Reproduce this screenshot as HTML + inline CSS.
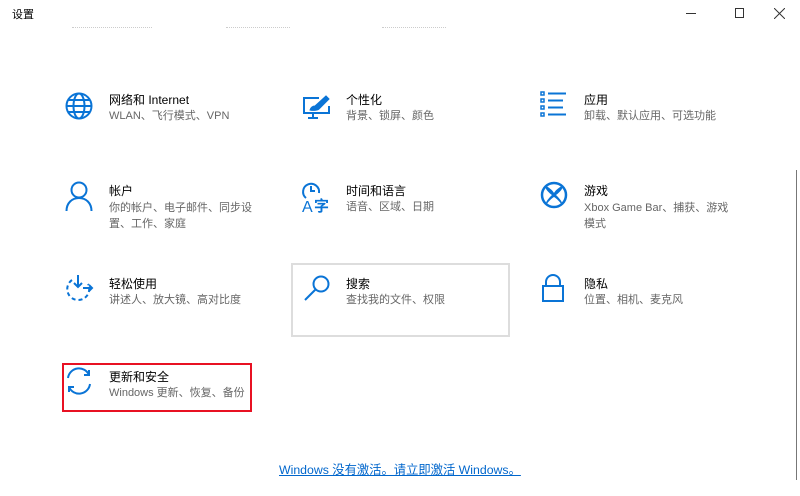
<!DOCTYPE html>
<html><head><meta charset="utf-8"><style>
*{margin:0;padding:0;box-sizing:border-box}
body{width:800px;height:496px;background:#fff;position:relative;overflow:hidden;font-family:"Liberation Sans","Noto Sans CJK SC",sans-serif;color:#000}
.t{position:absolute;font-size:12px;line-height:16px;white-space:nowrap}
.s{position:absolute;font-size:11px;line-height:15px;color:#666;white-space:nowrap}
svg{position:absolute}
.ic{stroke:#0a74d6;fill:none;stroke-width:2}
</style></head><body>
<div class="t" style="left:12px;top:7px;font-size:11px">设置</div>
<div style="position:absolute;left:686px;top:13px;width:10px;height:1px;background:#333"></div>
<div style="position:absolute;left:735px;top:8px;width:9px;height:10px;border:1px solid #333"></div>
<svg style="left:774px;top:8px" width="11" height="11"><path d="M0 0L11 11M11 0L0 11" stroke="#333" stroke-width="1"/></svg>
<div style="position:absolute;left:72px;top:27px;width:80px;height:2px;border-top:1px dotted #ccc"></div>
<div style="position:absolute;left:226px;top:27px;width:64px;height:2px;border-top:1px dotted #ccc"></div>
<div style="position:absolute;left:382px;top:27px;width:64px;height:2px;border-top:1px dotted #ccc"></div>
<div style="position:absolute;left:796px;top:170px;width:1px;height:310px;background:#777"></div>

<svg style="left:64px;top:91px" width="30" height="30" class="ic"><circle cx="15" cy="15" r="12.5"/><ellipse cx="15" cy="15" rx="5.5" ry="12.5"/><path d="M2.5 15H27.5M4.5 9H25.5M4.5 21H25.5"/></svg>
<div class="t" style="left:109px;top:92px">网络和 Internet</div>
<div class="s" style="left:109px;top:109px">WLAN、飞行模式、VPN</div>

<svg style="left:302px;top:94px" width="30" height="26" class="ic"><path d="M17 4H2V19H27V12"/><path d="M11 19V24M6 24H16"/><path d="M8 16C9 13 11 12 13 12L24 2 27 5 17 15C16 16 12 17 8 16Z" fill="#0a74d6" stroke-width="1"/></svg>
<div class="t" style="left:346px;top:92px">个性化</div>
<div class="s" style="left:346px;top:109px">背景、锁屏、颜色</div>

<svg style="left:540px;top:91px" width="28" height="26"><g fill="none" stroke="#0a74d6" stroke-width="1.5"><rect x="1" y="1" width="3" height="3"/><rect x="1" y="8" width="3" height="3"/><rect x="1" y="15" width="3" height="3"/><rect x="1" y="22" width="3" height="3"/></g><path d="M8 2.5H26M8 9.5H23M8 16.5H23M8 23.5H26" stroke="#0a74d6" stroke-width="2"/></svg>
<div class="t" style="left:584px;top:92px">应用</div>
<div class="s" style="left:584px;top:109px">卸载、默认应用、可选功能</div>

<svg style="left:65px;top:181px" width="28" height="30" class="ic"><circle cx="14" cy="9" r="7.5"/><path d="M1.5 30C1.5 22 7 17 14 17S26.5 22 26.5 30"/></svg>
<div class="t" style="left:109px;top:183px">帐户</div>
<div class="s" style="left:109px;top:200px;line-height:16px">你的帐户、电子邮件、同步设<br>置、工作、家庭</div>

<svg style="left:301px;top:181px" width="34" height="32"><g class="ic"><path d="M5 17A8 8 0 1 1 18 12"/><path d="M10 5V10H14"/></g><text x="1" y="31" font-size="16" fill="#0a74d6" font-family="Liberation Sans,sans-serif">A</text><text x="13" y="30" font-size="15" fill="#0a74d6" font-family="Noto Sans CJK SC,sans-serif" font-weight="bold">字</text></svg>
<div class="t" style="left:346px;top:183px">时间和语言</div>
<div class="s" style="left:346px;top:200px">语音、区域、日期</div>

<svg style="left:540px;top:181px" width="28" height="28"><circle cx="14" cy="14" r="12" fill="none" stroke="#0a74d6" stroke-width="2.5"/><path d="M6 5C10 7 13 10 14 12 15 10 18 7 22 5 24 7 19 12 16 14 19 17 23 21 22 24 20 21 16 17 14 16 12 17 8 21 6 24 5 21 9 17 12 14 9 12 4 7 6 5Z" fill="#0a74d6"/></svg>
<div class="t" style="left:584px;top:183px">游戏</div>
<div class="s" style="left:584px;top:200px;line-height:16px">Xbox Game Bar、捕获、游戏<br>模式</div>

<svg style="left:64px;top:274px" width="32" height="28" class="ic"><path d="M8 6A11 11 0 1 0 24 10" stroke-dasharray="4 3"/><path d="M14 1V13M10 9L14 13 18 9M19 14H28M25 11L28 14 25 17"/></svg>
<div class="t" style="left:109px;top:276px">轻松使用</div>
<div class="s" style="left:109px;top:293px">讲述人、放大镜、高对比度</div>

<div style="position:absolute;left:291px;top:263px;width:219px;height:74px;border:2px solid #ddd"></div>
<svg style="left:302px;top:274px" width="30" height="28" class="ic"><circle cx="19" cy="10" r="7.5"/><path d="M13.5 15.5L3 26"/></svg>
<div class="t" style="left:346px;top:276px">搜索</div>
<div class="s" style="left:346px;top:293px">查找我的文件、权限</div>

<svg style="left:541px;top:273px" width="26" height="30" class="ic"><path d="M5 13V9A7 7 0 0 1 19 9V13"/><rect x="2" y="13" width="20" height="15"/></svg>
<div class="t" style="left:584px;top:276px">隐私</div>
<div class="s" style="left:584px;top:293px">位置、相机、麦克风</div>

<div style="position:absolute;left:62px;top:363px;width:190px;height:49px;border:2px solid #e81123"></div>
<svg style="left:64px;top:366px" width="30" height="30" class="ic"><path d="M4 12A11 11 0 0 1 25 9"/><path d="M20 9H25V4"/><path d="M26 18A11 11 0 0 1 5 21"/><path d="M10 21H5V26"/></svg>
<div class="t" style="left:109px;top:369px">更新和安全</div>
<div class="s" style="left:109px;top:386px">Windows 更新、恢复、备份</div>

<div style="position:absolute;left:279px;top:462px;font-size:12.3px;line-height:16px;color:#0066cc;text-decoration:underline;white-space:nowrap">Windows 没有激活。请立即激活 Windows。</div>
</body></html>
